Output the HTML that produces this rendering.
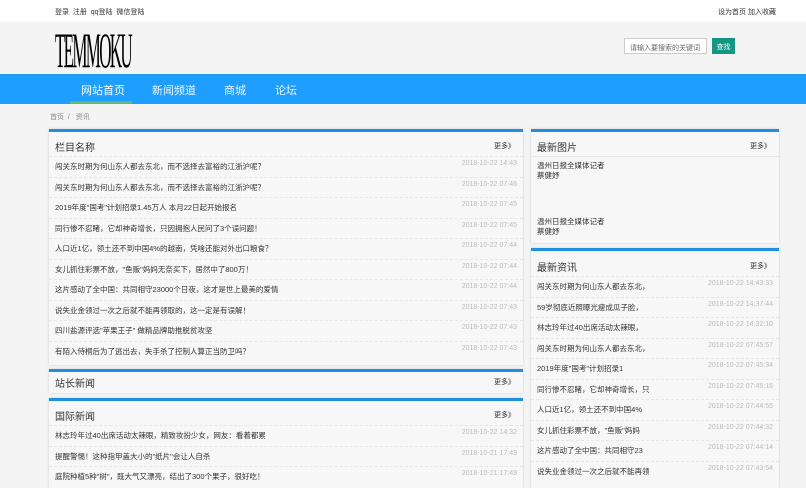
<!DOCTYPE html>
<html><head><meta charset="utf-8"><style>
*{margin:0;padding:0;box-sizing:border-box}
body{width:806px;height:482px;overflow:hidden;background:#f4f4f4;font-family:"Liberation Sans","Noto Sans CJK SC",sans-serif;color:#333;position:relative}
.a{position:absolute;white-space:nowrap}
.top{left:0;top:0;width:806px;height:22px;background:#fff}
.s{font-size:7px;color:#333}
.nav{left:0;top:74px;width:806px;height:30px;background:#1e9fff}
.nav span{position:absolute;top:8px;font-size:11px;color:#e8f4ff}
.panel{position:absolute;background:#f7f7f7;border-top:3px solid #1e90df;box-shadow:0 0 2px #ccc}
.h{position:absolute;left:6px;font-size:10px;color:#333}
.m{position:absolute;right:8px;font-size:7px;color:#333}
.r{position:absolute;left:0;right:0;height:20.5px;border-top:1px dashed #e6e6e6;font-size:7.5px;color:#333}
.r b{font-weight:normal;position:absolute;left:6px;top:4px}
.r i{font-style:normal;position:absolute;right:6px;top:3px;color:#bbb;font-size:7px}
</style></head><body>
<div class="a top"></div>
<div class="a s" style="left:55px;top:7px">登录 &nbsp;注册 &nbsp;qq登陆 &nbsp;微信登陆</div>
<div class="a s" style="left:718px;top:7px">设为首页 加入收藏</div>
<div class="a" style="left:55px;top:25px;font-family:'Liberation Serif',serif;font-size:50px;letter-spacing:-5px;transform:scaleX(0.34);transform-origin:left;color:#000;line-height:50px">TEMMOKU</div>
<div class="a" style="left:624px;top:38px;width:83px;height:16px;background:#fff;border:1px solid #ccc;font-size:7px;color:#666;padding:4px 5px">请输入要搜索的关键词</div>
<div class="a" style="left:712px;top:38px;width:23px;height:16px;background:#139783;color:#fff;font-size:7px;text-align:center;padding-top:4px">查找</div>
<div class="a nav">
<span style="left:81px;color:#fff">网站首页</span><span style="left:152px">新闻频道</span><span style="left:224px">商城</span><span style="left:275px">论坛</span>
<div style="position:absolute;left:70px;top:27px;width:62px;height:3px;background:#5fb878"></div>
</div>
<div class="a" style="left:50px;top:112px;font-size:7px;color:#888">首页 &nbsp;/ &nbsp;&nbsp;资讯</div>

<div class="panel" style="left:49px;top:129px;width:474px;height:236px">
<div class="h" style="top:7px">栏目名称</div><div class="m" style="top:9px">更多》</div>
<div class="r" style="top:24px"><b>闯关东时期为何山东人都去东北，而不选择去富裕的江浙沪呢？</b><i>2018-10-22 14:43</i></div>
<div class="r" style="top:44.5px"><b>闯关东时期为何山东人都去东北，而不选择去富裕的江浙沪呢？</b><i>2018-10-22 07:46</i></div>
<div class="r" style="top:65px"><b>2019年度"国考"计划招录1.45万人 本月22日起开始报名</b><i>2018-10-22 07:45</i></div>
<div class="r" style="top:85.5px"><b>同行惨不忍睹，它却神奇增长，只因拥抱人民问了3个误问题！</b><i>2018-10-22 07:45</i></div>
<div class="r" style="top:106px"><b>人口近1亿，领土还不到中国4%的越南，凭啥还能对外出口粮食？</b><i>2018-10-22 07:44</i></div>
<div class="r" style="top:126.5px"><b>女儿抓住彩票不放，"鱼贩"妈妈无奈买下，居然中了800万！</b><i>2018-10-22 07:44</i></div>
<div class="r" style="top:147px"><b>这片感动了全中国：共同相守23000个日夜，这才是世上最美的爱情</b><i>2018-10-22 07:44</i></div>
<div class="r" style="top:167.5px"><b>说失业金领过一次之后就不能再领取的，这一定是有误解！</b><i>2018-10-22 07:43</i></div>
<div class="r" style="top:188px"><b>四川盐源评选"苹果王子" 做精品牌助推脱贫攻坚</b><i>2018-10-22 07:43</i></div>
<div class="r" style="top:208.5px"><b>有陌入侍桐后为了逃出去，失手杀了控制人算正当防卫吗？</b><i>2018-10-22 07:43</i></div>
</div>

<div class="panel" style="left:49px;top:369px;width:474px;height:24px">
<div class="h" style="top:3px">站长新闻</div><div class="m" style="top:5px">更多》</div>
</div>

<div class="panel" style="left:49px;top:398px;width:474px;height:90px">
<div class="h" style="top:7px">国际新闻</div><div class="m" style="top:9px">更多》</div>
<div class="r" style="top:24px"><b>林志玲年过40出席活动太辣眼，精致妆扮少女，网友：看着都累</b><i>2018-10-22 14:32</i></div>
<div class="r" style="top:44.5px"><b>提醒警惕！这种指甲盖大小的"纸片"会让人自杀</b><i>2018-10-21 17:49</i></div>
<div class="r" style="top:65px"><b>庭院种植5种"树"，既大气又漂亮，结出了300个果子，很好吃！</b><i>2018-10-21 17:49</i></div>
</div>

<div class="panel" style="left:531px;top:129px;width:248px;height:114px">
<div class="h" style="top:7px">最新图片</div><div class="m" style="top:9px">更多》</div>
<div style="position:absolute;left:0;right:0;top:24px;border-top:1px solid #e6e6e6"></div>
<div class="a" style="left:6px;top:29px;font-size:7.5px;line-height:10px">温州日报全媒体记者<br>蔡健妤</div>
<div class="a" style="left:6px;top:85px;font-size:7.5px;line-height:10px">温州日报全媒体记者<br>蔡健妤</div>
</div>

<div class="panel" style="left:531px;top:248px;width:248px;height:240px">
<div class="h" style="top:8px">最新资讯</div><div class="m" style="top:10px">更多》</div>
<div class="r" style="top:25px"><b>闯关东时期为何山东人都去东北，</b><i>2018-10-22 14:43:33</i></div>
<div class="r" style="top:45.5px"><b>59岁彻底近照曝光瘦成瓜子脸，</b><i>2018-10-22 14:37:44</i></div>
<div class="r" style="top:66px"><b>林志玲年过40出席活动太辣眼，</b><i>2018-10-22 14:32:10</i></div>
<div class="r" style="top:86.5px"><b>闯关东时期为何山东人都去东北，</b><i>2018-10-22 07:45:57</i></div>
<div class="r" style="top:107px"><b>2019年度"国考"计划招录1</b><i>2018-10-22 07:45:34</i></div>
<div class="r" style="top:127.5px"><b>同行惨不忍睹，它却神奇增长，只</b><i>2018-10-22 07:45:16</i></div>
<div class="r" style="top:148px"><b>人口近1亿，领土还不到中国4%</b><i>2018-10-22 07:44:55</i></div>
<div class="r" style="top:168.5px"><b>女儿抓住彩票不放，"鱼贩"妈妈</b><i>2018-10-22 07:44:32</i></div>
<div class="r" style="top:189px"><b>这片感动了全中国：共同相守23</b><i>2018-10-22 07:44:14</i></div>
<div class="r" style="top:209.5px"><b>说失业金领过一次之后就不能再领</b><i>2018-10-22 07:43:54</i></div>
</div>
</body></html>
